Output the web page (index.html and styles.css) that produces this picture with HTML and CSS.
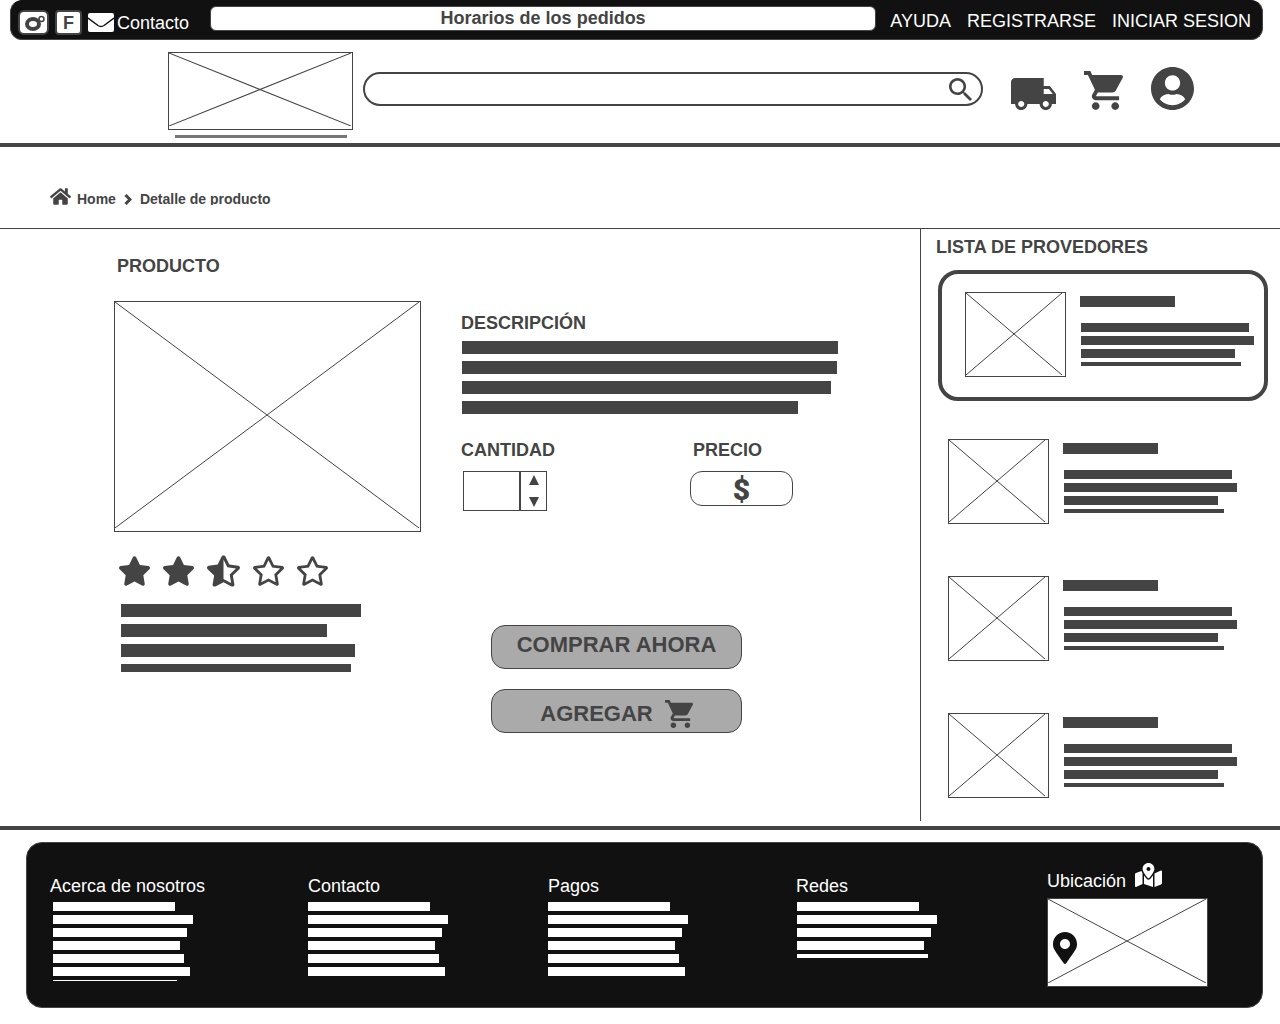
FILE: index.html
```html
<!DOCTYPE html>
<html lang="es">
<head>
<meta charset="utf-8">
<meta name="viewport" content="width=device-width, initial-scale=1">
<title>Detalle de producto</title>
<link rel="stylesheet" href="styles.css">
</head>
<body>
<svg class="sprite" aria-hidden="true">
  <symbol id="cart" viewBox="1 2 20 20"><path d="M7 18c-1.1 0-1.99.9-1.99 2S5.9 22 7 22s2-.9 2-2-.9-2-2-2zM1 2v2h2l3.6 7.59-1.35 2.45c-.16.28-.25.61-.25.96 0 1.1.9 2 2 2h12v-2H7.42c-.14 0-.25-.11-.25-.25l.03-.12.9-1.63h7.45c.75 0 1.41-.41 1.75-1.03l3.58-6.49c.08-.14.12-.31.12-.48 0-.55-.45-1-1-1H5.21l-.94-2H1zm16 16c-1.1 0-1.99.9-1.99 2s.89 2 1.99 2 2-.9 2-2-.9-2-2-2z"/></symbol>
  <symbol id="star-full" viewBox="20 0 536 512"><path d="M259.3 17.8L194 150.2 47.9 171.5c-26.2 3.8-36.7 36.1-17.7 54.6l105.7 103-25 145.5c-4.5 26.3 23.2 46 46.4 33.7L288 439.6l130.7 68.7c23.2 12.2 50.9-7.4 46.4-33.7l-25-145.5 105.7-103c19-18.5 8.5-50.8-17.7-54.6L382 150.2 316.7 17.8c-11.7-23.6-45.6-23.9-57.4 0z"/></symbol>
  <symbol id="star-empty" viewBox="20 0 536 512"><path d="M528.1 171.5L382 150.2 316.7 17.8c-11.7-23.6-45.6-23.9-57.4 0L194 150.2 47.9 171.5c-26.2 3.8-36.7 36.1-17.7 54.6l105.7 103-25 145.5c-4.5 26.3 23.2 46 46.4 33.7L288 439.6l130.7 68.7c23.2 12.2 50.9-7.4 46.4-33.7l-25-145.5 105.7-103c19-18.5 8.5-50.8-17.7-54.6zM388.6 312.3l23.7 138.4L288 385.4l-124.3 65.3 23.7-138.4-100.6-98 139-20.2 62.2-126 62.2 126 139 20.2-100.6 98z"/></symbol>
  <symbol id="star-half" viewBox="20 0 536 512"><use href="#star-empty" x="20" y="0" width="536" height="512"/><path d="M288 20L200 160 60 190l100 120-30 170 158-70z"/></symbol>
  <symbol id="crossed" viewBox="0 0 100 100" preserveAspectRatio="none"><path class="cross-lines" d="M0 0L100 100M100 0L0 100"/></symbol>
</svg>

<header>
  <div class="topbar">
    <div class="social">
      <a class="badge badge-camera" href="#" aria-label="Instagram">
        <svg width="26" height="20" viewBox="0 0 26 20" aria-hidden="true"><g fill="none" stroke="#444"><ellipse cx="12" cy="11" rx="6" ry="5" stroke-width="4"/><circle cx="20.500" cy="6" r="2.500" stroke-width="1.500" fill="#fff"/></g></svg>
      </a>
      <a class="badge badge-letter" href="#">F</a>
      <a class="contact" href="#">
        <svg width="26" height="19" viewBox="0 0 26 19" aria-hidden="true"><rect width="26" height="19" rx="2" fill="#fff"/><path d="M0 5l10 7.500q3 2 6 0l10-7.500" fill="none" stroke="#111" stroke-width="1.500"/></svg>
        <span>Contacto</span>
      </a>
    </div>
    <p class="schedule">Horarios de los pedidos</p>
    <nav class="account-links">
      <a href="#">AYUDA</a>
      <a href="#">REGISTRARSE</a>
      <a href="#">INICIAR SESION</a>
    </nav>
  </div>

  <div class="masthead">
    <div class="logo">
      <svg class="picture" role="img" aria-label="Logo"><use href="#crossed"/></svg>
      <div class="logo-line"></div>
    </div>
    <form class="search">
      <input type="search" aria-label="Buscar">
      <button type="button" aria-label="Buscar">
        <svg width="23" height="23" viewBox="3 3 17.500 17.500" aria-hidden="true"><path d="M15.5 14h-.79l-.28-.27C15.41 12.59 16 11.11 16 9.5 16 5.91 13.09 3 9.5 3S3 5.91 3 9.5 5.91 16 9.5 16c1.61 0 3.09-.59 4.23-1.57l.27.28v.79l5 4.99L20.49 19l-4.99-5zm-6 0C7.01 14 5 11.99 5 9.5S7.01 5 9.5 5 14 7.01 14 9.5 11.99 14 9.5 14z"/></svg>
      </button>
    </form>
    <nav class="tools">
      <a href="#" aria-label="Envíos"><svg width="45" height="32" viewBox="1 4 22 16" preserveAspectRatio="none" aria-hidden="true"><path d="M20 8h-3V4H3c-1.100 0-2 .9-2 2v11h2c0 1.660 1.340 3 3 3s3-1.340 3-3h6c0 1.660 1.340 3 3 3s3-1.340 3-3h2v-5l-3-4zM6 18.500c-.83 0-1.500-.67-1.500-1.500s.67-1.500 1.500-1.500 1.500.67 1.500 1.500-.67 1.500-1.500 1.500zm13.500-9l1.960 2.500H17V9.500h2.500zm-1.500 9c-.83 0-1.500-.67-1.500-1.500s.67-1.500 1.500-1.500 1.500.67 1.500 1.500-.67 1.500-1.500 1.500z"/></svg></a>
      <a href="#" aria-label="Carrito"><svg width="39" height="39" aria-hidden="true"><use href="#cart"/></svg></a>
      <a href="#" aria-label="Mi cuenta"><svg width="43" height="43" viewBox="0 8 496 496" aria-hidden="true"><path d="M248 8C111 8 0 119 0 256s111 248 248 248 248-111 248-248S385 8 248 8zm0 96c48.600 0 88 39.400 88 88s-39.400 88-88 88-88-39.400-88-88 39.400-88 88-88zm0 344c-58.700 0-111.300-26.600-146.500-68.200 18.800-35.400 55.600-59.800 98.500-59.800 2.400 0 4.800.4 7.100 1.100 13 4.200 26.600 6.900 40.900 6.900 14.300 0 28-2.700 40.900-6.900 2.300-.7 4.700-1.100 7.100-1.100 42.900 0 79.700 24.400 98.500 59.800C359.300 421.400 306.700 448 248 448z"/></svg></a>
    </nav>
  </div>
</header>

<nav class="breadcrumb" aria-label="Ruta">
  <svg width="21" height="17" viewBox="0 32 576 448" aria-hidden="true"><path d="M488 312.700V456c0 13.300-10.700 24-24 24H348c-6.600 0-12-5.400-12-12V356c0-6.600-5.400-12-12-12h-72c-6.600 0-12 5.400-12 12v112c0 6.600-5.400 12-12 12H112c-13.300 0-24-10.700-24-24V312.700c0-3.600 1.600-7 4.400-9.300l188-154.800c4.400-3.600 10.800-3.600 15.300 0l188 154.800c2.700 2.300 4.300 5.700 4.300 9.300zm83.600-60.900L488 182.900V44.400c0-6.600-5.400-12-12-12h-56c-6.600 0-12 5.400-12 12V117l-89.500-73.700c-17.700-14.600-43.300-14.600-61 0L4.400 251.800c-5.100 4.200-5.800 11.800-1.600 16.900l25.500 31c4.200 5.100 11.800 5.800 16.900 1.600l235.200-193.700c4.400-3.600 10.800-3.600 15.300 0l235.200 193.700c5.100 4.200 12.700 3.500 16.900-1.600l25.500-31c4.200-5.200 3.400-12.700-1.700-16.900z"/></svg>
  <a href="#">Home</a>
  <svg class="chevron" width="8" height="11" viewBox="0 0 8 11" aria-hidden="true"><path d="M1.500 1l4.500 4.500-4.500 4.500" fill="none" stroke="#444" stroke-width="3"/></svg>
  <a class="current" href="#" aria-current="page">Detalle de producto</a>
</nav>

<div class="content">
  <main>
    <h1>PRODUCTO</h1>
    <div class="product">
      <section class="gallery">
        <svg class="picture" role="img" aria-label="Foto del producto"><use href="#crossed"/></svg>
        <div class="stars" role="img" aria-label="2,5 de 5 estrellas">
          <svg width="31" height="30"><use href="#star-full"/></svg>
          <svg width="31" height="30"><use href="#star-full"/></svg>
          <svg width="33" height="32"><use href="#star-half"/></svg>
          <svg width="31" height="30"><use href="#star-empty"/></svg>
          <svg width="31" height="30"><use href="#star-empty"/></svg>
        </div>
        <div class="bars bars-large bars-review">
          <i style="width:240px"></i><i style="width:206px"></i><i style="width:234px"></i><i style="width:230px"></i>
        </div>
      </section>
      <section class="details">
        <h2>DESCRIPCIÓN</h2>
        <div class="bars bars-large bars-description">
          <i style="width:376px"></i><i style="width:375px"></i><i style="width:369px"></i><i style="width:336px"></i>
        </div>
        <div class="purchase">
          <div class="quantity">
            <label for="quantity">CANTIDAD</label>
            <div class="stepper">
              <input id="quantity" type="text" inputmode="numeric">
              <div class="steps">
                <button type="button" aria-label="Aumentar"><svg width="10" height="10" viewBox="0 0 10 10"><path d="M0 10L5 0l5 10z"/></svg></button>
                <button type="button" aria-label="Disminuir"><svg width="10" height="10" viewBox="0 0 10 10"><path d="M0 0h10L5 10z"/></svg></button>
              </div>
            </div>
          </div>
          <div class="price">
            <h2>PRECIO</h2>
            <p>$</p>
          </div>
        </div>
        <div class="actions">
          <button class="buy" type="button">COMPRAR AHORA</button>
          <button class="add" type="button">AGREGAR <svg width="28" height="28" aria-hidden="true"><use href="#cart"/></svg></button>
        </div>
      </section>
    </div>
  </main>

  <aside>
    <h2>LISTA DE PROVEDORES</h2>
    <ul class="providers">
      <li class="selected">
        <svg class="picture" role="img" aria-label="Proveedor 1"><use href="#crossed"/></svg>
        <div class="provider-text"><div class="provider-name"></div><div class="bars"><i></i><i></i><i></i><i></i></div></div>
      </li>
      <li>
        <svg class="picture" role="img" aria-label="Proveedor 2"><use href="#crossed"/></svg>
        <div class="provider-text"><div class="provider-name"></div><div class="bars"><i></i><i></i><i></i><i></i></div></div>
      </li>
      <li>
        <svg class="picture" role="img" aria-label="Proveedor 3"><use href="#crossed"/></svg>
        <div class="provider-text"><div class="provider-name"></div><div class="bars"><i></i><i></i><i></i><i></i></div></div>
      </li>
      <li>
        <svg class="picture" role="img" aria-label="Proveedor 4"><use href="#crossed"/></svg>
        <div class="provider-text"><div class="provider-name"></div><div class="bars"><i></i><i></i><i></i><i></i></div></div>
      </li>
    </ul>
  </aside>
</div>

<div class="footer-wrap">
  <footer>
    <section>
      <h3>Acerca de nosotros</h3>
      <div class="bars bars-about"><i></i><i></i><i></i><i></i><i></i><i></i><i></i></div>
    </section>
    <section>
      <h3>Contacto</h3>
      <div class="bars"><i></i><i></i><i></i><i></i><i></i><i></i></div>
    </section>
    <section>
      <h3>Pagos</h3>
      <div class="bars"><i></i><i></i><i></i><i></i><i></i><i></i></div>
    </section>
    <section>
      <h3>Redes</h3>
      <div class="bars bars-networks"><i></i><i></i><i></i><i></i><i></i></div>
    </section>
    <section class="location">
      <h3>Ubicación
        <svg width="27" height="24" viewBox="0 0 576 512" aria-hidden="true"><path fill="#fff" d="M288 0c-69.590 0-126 56.410-126 126 0 56.260 82.350 158.800 113.900 196.020 6.390 7.540 17.820 7.540 24.200 0C331.650 284.800 414 182.260 414 126 414 56.410 357.590 0 288 0zm0 168c-23.200 0-42-18.800-42-42s18.800-42 42-42 42 18.800 42 42-18.800 42-42 42zM20.120 215.950A32.006 32.006 0 0 0 0 245.660v250.320c0 11.320 11.430 19.060 21.940 14.860L160 448V214.920c-8.840-15.980-16.070-31.540-21.250-46.420L20.120 215.950zM288 359.670c-14.070 0-27.380-6.180-36.510-16.960-19.660-23.200-40.570-49.620-59.490-76.720v182l192 64V266c-18.920 27.090-39.820 53.520-59.490 76.720-9.130 10.770-22.440 16.950-36.510 16.950zm266.060-198.510L416 224v288l139.880-55.950A31.996 31.996 0 0 0 576 426.340V176.020c0-11.320-11.430-19.060-21.940-14.860z"/></svg>
      </h3>
      <div class="map">
        <svg class="picture" role="img" aria-label="Mapa"><use href="#crossed"/></svg>
        <svg class="pin" width="24" height="32" viewBox="0 0 384 512" aria-hidden="true"><path fill="#111" d="M172.268 501.670C26.970 291.031 0 269.413 0 192 0 85.961 85.961 0 192 0s192 85.961 192 192c0 77.413-26.970 99.031-172.268 309.670-9.535 13.774-29.930 13.773-39.464 0zM192 272c44.183 0 80-35.817 80-80s-35.817-80-80-80-80 35.817-80 80 35.817 80 80 80z"/></svg>
      </div>
    </section>
  </footer>
</div>
</body>
</html>
```
FILE: styles.css
```css
* { box-sizing: border-box; }

body {
  margin: 0;
  background: #fff;
  color: #444;
  font: 18px/20px "Liberation Sans", Arial, sans-serif;
}

h1, h2, h3, p, ul { margin: 0; padding: 0; }
h1, h2, h3 { font-size: 18px; line-height: 20px; }
ul { list-style: none; }
a { color: inherit; text-decoration: none; }
svg { display: block; flex: none; fill: #444; }
input, button { font: inherit; color: inherit; border-radius: 0; padding: 0; margin: 0; }

.sprite { position: absolute; width: 0; height: 0; }

/* Image placeholder: a frame with two diagonals */
.picture {
  width: 100%;
  border: 1px solid #444;
  padding: 0 1px 3px 0;
  background: #fff;
}
.cross-lines { fill: none; stroke: #444; stroke-width: 1px; vector-effect: non-scaling-stroke; }

/* Text placeholder: stacked bars */
.bars { display: flex; flex-direction: column; gap: 4px; overflow: hidden; }
.bars i { flex: none; height: 9px; background: #444; max-width: 100%; }
.bars-large { gap: 7px; }
.bars-large i { height: 13px; }

/* Top bar */
.topbar {
  display: flex;
  align-items: flex-start;
  margin: 0 17px 0 10px;
  min-height: 40px;
  padding: 5px 11px 4px 7px;
  background: #111;
  border: 1px solid #444;
  border-top-color: #111;
  border-radius: 12px;
  color: #fff;
}
.social { display: flex; align-items: center; gap: 6px; padding-top: 4px; width: 192px; }
.badge {
  display: grid;
  place-items: center;
  height: 25px;
  background: #fff;
  border: 2px solid #444;
  border-radius: 6px;
  color: #444;
  font-weight: bold;
}
.badge-camera { width: 31px; }
.badge-letter { width: 27px; border-radius: 4px; }
.contact { display: flex; align-items: center; gap: 3px; }
.schedule {
  flex: 1;
  height: 25px;
  padding: 1px 0;
  background: #fff;
  border: 1px solid #444;
  border-radius: 6px;
  color: #444;
  font-weight: bold;
  text-align: center;
}
.account-links { display: flex; gap: 16px; padding: 5px 0 0 14px; }

/* Masthead */
.masthead {
  display: flex;
  align-items: flex-start;
  padding: 12px 86px 5px 168px;
  border-bottom: 4px solid #444;
}
.logo { width: 185px; margin-right: 10px; }
.logo .picture { height: 78px; }
.logo-line { height: 3px; margin: 5px 6px 0 7px; background: #777; }
.search {
  display: flex;
  align-items: center;
  flex: 1;
  height: 34px;
  margin-top: 20px;
  padding: 0 9px 0 16px;
  border: 2px solid #444;
  border-radius: 17px;
}
.search input { flex: 1; min-width: 0; border: 0; outline: 0; background: none; }
.search button { border: 0; background: none; }
.tools { display: flex; align-items: flex-end; gap: 28px; margin: 15px 0 0 28px; }

/* Breadcrumb */
.breadcrumb {
  display: flex;
  align-items: flex-end;
  gap: 6px;
  padding: 41px 50px 23px;
  border-bottom: 1px solid #444;
  font-size: 14px;
  line-height: 16px;
  font-weight: bold;
}
.breadcrumb a { height: 14px; }
.breadcrumb .current { overflow: hidden; }
.chevron { margin: 0 2px; }

/* Columns */
.content { display: grid; grid-template-columns: minmax(0, 1fr) 360px; }
main { padding: 27px 40px 40px 114px; }
h1 { margin: 0 0 25px 3px; }
.product { display: grid; grid-template-columns: 307px minmax(0, 1fr); gap: 40px; }
.gallery .picture { height: 231px; }
.stars { display: flex; align-items: center; gap: 13px; padding: 23px 5px 17px; }
.bars-review { height: 68px; margin-left: 7px; }

.details { padding-top: 12px; }
.bars-description { margin: 8px 0 26px 1px; }
.purchase { display: flex; }
.quantity { width: 229px; }
.quantity label { display: block; margin-bottom: 11px; font-weight: bold; }
.stepper { display: flex; margin-left: 2px; }
.stepper input { width: 57px; height: 40px; border: 1px solid #444; text-align: center; background: #fff; }
.steps {
  display: flex;
  flex-direction: column;
  justify-content: space-between;
  width: 27px;
  height: 40px;
  padding: 3px 0;
  border: 1px solid #444;
}
.steps button { display: grid; place-items: center; border: 0; background: none; }
.price h2 { margin: 0 0 11px 3px; }
.price p {
  width: 103px;
  height: 35px;
  border: 1px solid #444;
  border-radius: 12px;
  font: 900 30px/36px Roboto, sans-serif;
  text-align: center;
}
.actions { display: flex; flex-direction: column; gap: 20px; width: 251px; margin: 114px 0 0 30px; }
.actions button {
  display: flex;
  align-items: center;
  justify-content: center;
  gap: 12px;
  height: 44px;
  background: #aaa;
  border: 1px solid #444;
  border-radius: 14px;
  font-size: 22px;
  line-height: 26px;
  font-weight: bold;
}
.actions .buy { padding-bottom: 4px; }
.actions .add { padding-top: 6px; }

/* Providers */
aside { padding: 8px 12px 9px 17px; border-left: 1px solid #444; }
aside h2 { margin: 0 0 13px -2px; }
.providers { display: flex; flex-direction: column; gap: 24px; }
.providers li { display: flex; gap: 14px; padding: 14px 10px; }
.providers .selected {
  padding: 18px 8px 20px 23px;
  border: 4px solid #444;
  border-radius: 20px;
}
.providers .picture { width: 101px; height: 85px; padding: 0 3px 1px 0; }
.provider-text { flex: 1; padding-top: 4px; }
.provider-name { width: 95px; height: 11px; margin-bottom: 16px; background: #444; }
.provider-text .bars { height: 43px; margin-left: 1px; }
.provider-text i:nth-child(1) { width: 168px; }
.provider-text i:nth-child(2) { width: 173px; }
.provider-text i:nth-child(3) { width: 154px; }
.provider-text i:nth-child(4) { width: 160px; }

/* Footer */
.footer-wrap { margin-top: 5px; padding: 12px 17px 16px 26px; border-top: 4px solid #444; }
footer {
  display: grid;
  grid-template-columns: 258fr 240fr 248fr 251fr 161px;
  min-height: 166px;
  padding: 20px 54px 20px 23px;
  background: #111;
  border: 1px solid #444;
  border-radius: 16px;
  color: #fff;
}
footer h3 { margin: 13px 0 6px; font-weight: normal; }
footer .bars i { background: #fff; }
footer .bars-about { height: 79px; margin-left: 3px; }
footer .bars-networks { height: 56px; margin-left: 1px; }
footer i:nth-child(1) { width: 122px; }
footer i:nth-child(2) { width: 140px; }
footer i:nth-child(3) { width: 134px; }
footer i:nth-child(4) { width: 127px; }
footer i:nth-child(5) { width: 131px; }
footer i:nth-child(6) { width: 137px; }
footer i:nth-child(7) { width: 124px; }
.location h3 { display: flex; align-items: baseline; gap: 9px; margin: 0 0 7px; }
.map { position: relative; }
.map .picture { height: 89px; }
.pin { position: absolute; left: 6px; top: 34px; }
```
